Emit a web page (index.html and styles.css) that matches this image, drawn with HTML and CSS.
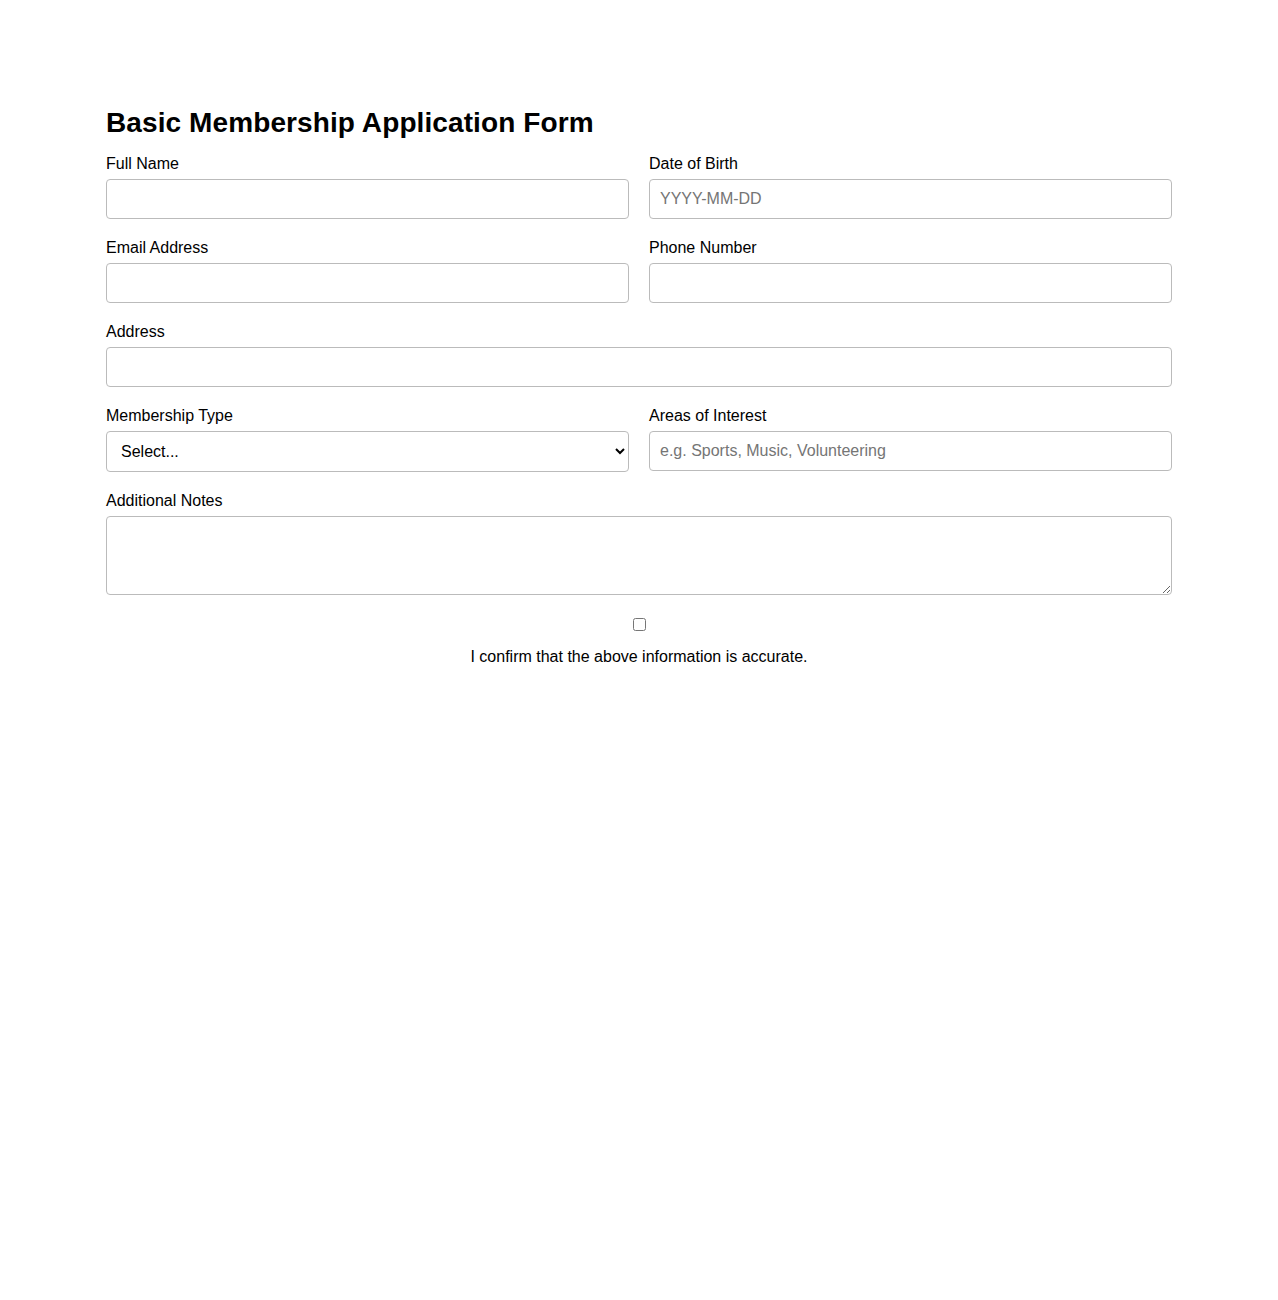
FILE: index.html
```html
<!DOCTYPE html>
<html lang="en">
<head>
    <meta charset="UTF-8">
    <meta name="viewport" content="width=device-width, initial-scale=1.0">
    <title>Basic Membership Application Form</title>
    <link rel="stylesheet" href="styles.css">
</head>
<body>
    <div class="form-container">
        <h1>Basic Membership Application Form</h1>
        <form id="membership-form" class="form-grid">
            <div class="field">
                <label for="full-name">Full Name</label>
                <input type="text" id="full-name">
            </div>
            <div class="field">
                <label for="dob">Date of Birth</label>
                <input type="text" id="dob" placeholder="YYYY-MM-DD">
            </div>
            <div class="field">
                <label for="email">Email Address</label>
                <input type="email" id="email">
            </div>
            <div class="field">
                <label for="phone">Phone Number</label>
                <input type="tel" id="phone">
            </div>
            <div class="field full">
                <label for="address">Address</label>
                <input type="text" id="address">
            </div>
            <div class="field">
                <label for="membership-type">Membership Type</label>
                <select id="membership-type">
                    <option value="">Select...</option>
                    <option value="basic">Basic</option>
                    <option value="premium">Premium</option>
                    <option value="family">Family</option>
                </select>
            </div>
            <div class="field">
                <label for="interests">Areas of Interest</label>
                <input type="text" id="interests" placeholder="e.g. Sports, Music, Volunteering">
            </div>
            <div class="field full">
                <label for="notes">Additional Notes</label>
                <textarea id="notes" rows="4"></textarea>
            </div>
            <div class="confirm full">
                <input type="checkbox" id="confirm">
                <label for="confirm">I confirm that the above information is accurate.</label>
            </div>
        </form>
    </div>
</body>
</html>
```

FILE: styles.css
```css
body {
    margin: 0;
    font-family: "Liberation Sans", Arial, sans-serif;
    background-color: #fff;
    color: #000;
}

.form-container {
    max-width: 1066px;
    margin: 0 auto;
    padding-top: 107px;
}

.form-container h1 {
    font-size: 28px;
    letter-spacing: 0.1px;
    margin: 0 0 16px 0;
}

.form-grid {
    display: grid;
    grid-template-columns: 1fr 1fr;
    column-gap: 20px;
    row-gap: 20px;
}

.field {
    display: flex;
    flex-direction: column;
}

.full {
    grid-column: 1 / -1;
}

.field label {
    font-size: 16px;
    margin-bottom: 6px;
}

.field input, .field select, .field textarea {
    font-family: inherit;
    font-size: 16px;
    padding: 10px;
    border: 1px solid #bbb;
    border-radius: 4px;
    box-sizing: border-box;
}

.field input {
    height: 40px;
}

.field select {
    height: 41px;
    background-color: #fff;
    color: #000;
}

.field textarea {
    height: 79px;
    resize: vertical;
}

.confirm {
    text-align: center;
    font-size: 16px;
}

.confirm input {
    display: block;
    margin: 3px auto 17px auto;
}

.confirm label {
    display: block;
}
```
